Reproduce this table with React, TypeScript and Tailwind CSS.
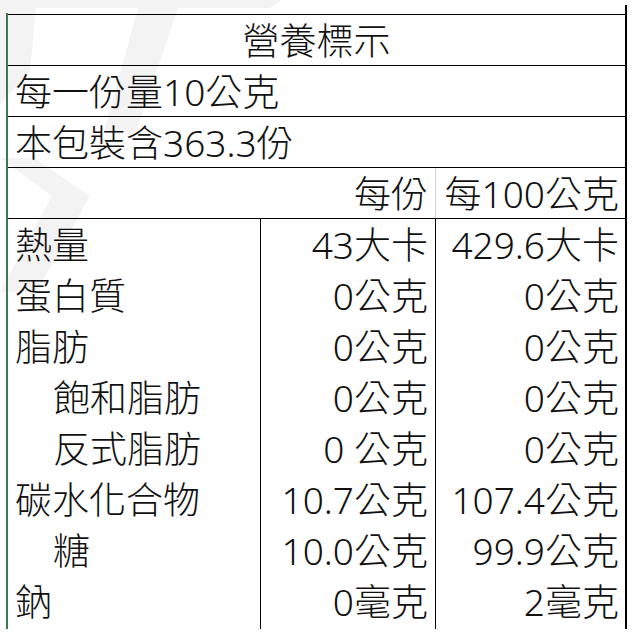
import React from "react"

const FONT = { fontFamily: '"Noto Sans", "Noto Sans CJK TC", sans-serif' }

type Row = { label: string; indent?: boolean; perServing: string; per100: string }

const ROWS: Row[] = [
  { label: "熱量", perServing: "43大卡", per100: "429.6大卡" },
  { label: "蛋白質", perServing: "0公克", per100: "0公克" },
  { label: "脂肪", perServing: "0公克", per100: "0公克" },
  { label: "飽和脂肪", indent: true, perServing: "0公克", per100: "0公克" },
  { label: "反式脂肪", indent: true, perServing: "0 公克", per100: "0公克" },
  { label: "碳水化合物", perServing: "10.7公克", per100: "107.4公克" },
  { label: "糖", indent: true, perServing: "10.0公克", per100: "99.9公克" },
  { label: "鈉", perServing: "0毫克", per100: "2毫克" },
]

function Watermark() {
  // faint logo behind the label
  return (
    <svg className="absolute inset-0" width="636" height="636" viewBox="0 0 636 636" aria-hidden="true">
      <g fill="#f3f3f3">
        <path d="M0 0 L282 0 L270 8 L0 8 Z" />
        <path d="M0 8 L36 8 L30 70 L0 105 Z" />
        <path d="M138 8 L178 8 L136 132 L104 132 Z" />
        <path d="M0 158 L34 158 L90 196 L36 292 L0 292 L52 196 Z" />
      </g>
    </svg>
  )
}

export default function App() {
  return (
    <div className="relative h-[636px] w-[636px] overflow-hidden bg-white text-[37px] font-light text-[#111]" style={FONT}>
      <Watermark />
      <div className="relative ml-[6px] mt-[5px] flex h-[624px] w-[621px] flex-col border-r-2 border-black">
        <div className="mt-[8px] flex flex-1 flex-col border-l-2 border-[#3d7a50]">
          <div className="mt-px flex flex-1 flex-col border-t border-black">
            {/* title + serving info */}
            <div className="flex h-[51px] items-center justify-center border-b border-black leading-none">
              營養標示
            </div>
            <div className="flex h-[51px] items-center border-b border-black pl-[7px] leading-none">
              每一份量10公克
            </div>
            <div className="flex h-[51px] items-center border-b border-black pl-[7px] leading-none">
              本包裝含363.3份
            </div>
            <div className="grid h-[51px] grid-cols-[253px_175px_1fr] border-b border-black leading-none">
              <div />
              <div className="flex items-center justify-end border-r border-[#d4d4d4] pr-[7px]">每份</div>
              <div className="flex items-center justify-end pr-[6px]">每100公克</div>
            </div>

            {/* nutrients */}
            <div className="grid flex-1 grid-cols-[253px_175px_1fr] leading-none">
              <div className="flex flex-col border-r border-black">
                {ROWS.map((r) => (
                  <div
                    key={r.label}
                    className={`flex h-[51px] items-center ${r.indent ? "pl-[45px]" : "pl-[7px]"}`}
                  >
                    {r.label}
                  </div>
                ))}
              </div>
              <div className="flex flex-col border-r border-black">
                {ROWS.map((r) => (
                  <div key={r.label} className="flex h-[51px] items-center justify-end whitespace-pre pr-[7px]">
                    {r.perServing}
                  </div>
                ))}
              </div>
              <div className="flex flex-col">
                {ROWS.map((r) => (
                  <div key={r.label} className="flex h-[51px] items-center justify-end pr-[6px]">
                    {r.per100}
                  </div>
                ))}
              </div>
            </div>
          </div>
        </div>
      </div>
    </div>
  )
}
